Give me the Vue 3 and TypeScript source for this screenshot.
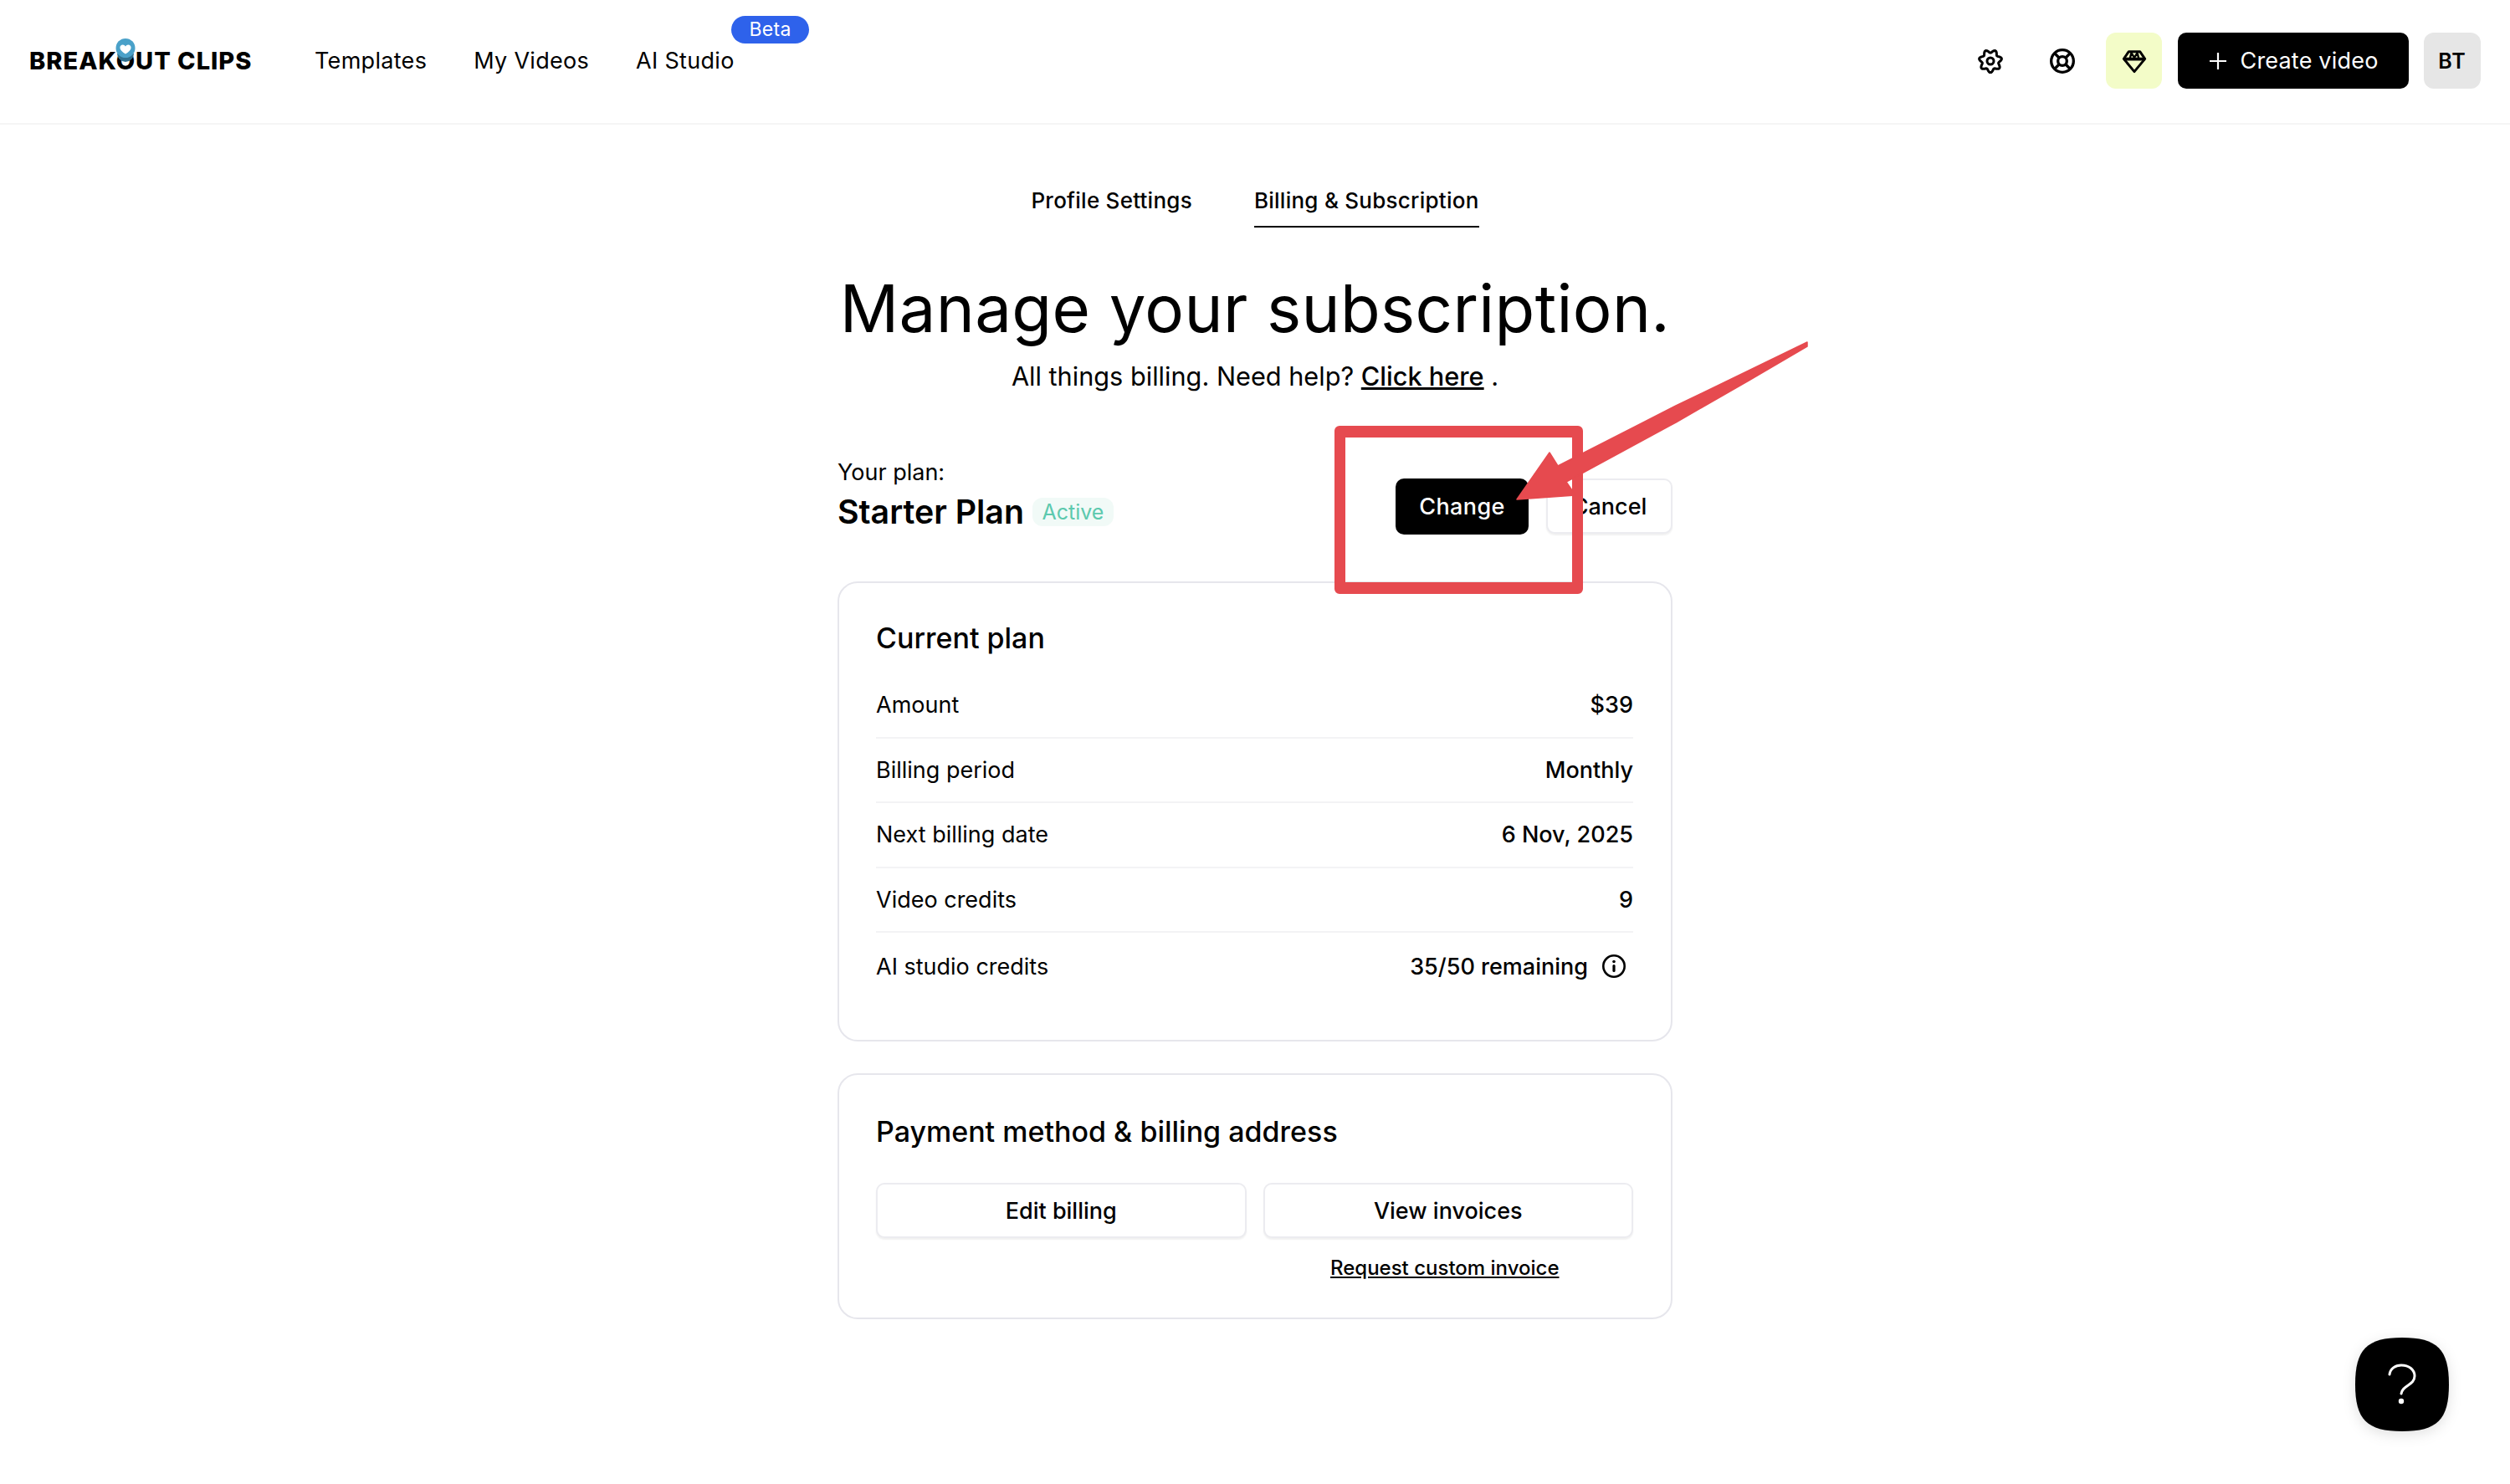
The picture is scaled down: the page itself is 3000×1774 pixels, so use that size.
<script setup lang="ts">
interface PlanRow {
  label: string;
  value: string;
  info?: boolean;
}

const navLinks = ["Templates", "My Videos", "AI Studio"];

const planRows: PlanRow[] = [
  { label: "Amount", value: "$39" },
  { label: "Billing period", value: "Monthly" },
  { label: "Next billing date", value: "6 Nov, 2025" },
  { label: "Video credits", value: "9" },
  { label: "AI studio credits", value: "35/50 remaining", info: true },
];

// wavy eight-lobed outline of the settings icon
function gearOutline(): string {
  const points: string[] = [];
  for (let i = 0; i < 96; i++) {
    const angle = (i / 96) * Math.PI * 2;
    const radius = 11.8 + 1.9 * Math.cos(angle * 7 + Math.PI / 2 + 1.57);
    points.push(`${(15 + radius * Math.sin(angle)).toFixed(2)} ${(15 - radius * Math.cos(angle)).toFixed(2)}`);
  }
  return "M" + points.join("L") + "Z";
}
</script>

<template>
  <div class="page">
    <header class="topbar">
      <div class="topbar-left">
        <div class="logo">
          <span class="logo-text">BREAKOUT CLIPS</span>
          <svg class="logo-pin" width="26" height="36" viewBox="0 0 26 36">
            <path d="M3 19a10 10 0 0 0 20 0z" fill="#2f6f8e" />
            <circle cx="13" cy="12.5" r="11.5" fill="#4aa1c9" />
            <path d="M13 19.500c-4-2.600-6.600-4.900-6.600-7.600 0-2 1.500-3.400 3.300-3.400 1.400 0 2.600.8 3.300 2 .7-1.200 1.900-2 3.300-2 1.800 0 3.300 1.400 3.300 3.400 0 2.700-2.600 5-6.600 7.600z" fill="#fff" />
          </svg>
        </div>
        <nav class="nav">
          <a v-for="link in navLinks" :key="link" class="nav-link">
            {{ link }}
            <span v-if="link === 'AI Studio'" class="beta">Beta</span>
          </a>
        </nav>
      </div>
      <div class="topbar-right">
        <svg class="icon gear" width="30" height="30" viewBox="0 0 30 30" fill="none" stroke="#000" stroke-width="3">
          <path :d="gearOutline()" stroke-linejoin="round" />
          <circle cx="15" cy="15" r="4" />
        </svg>
        <svg class="icon buoy" width="32" height="32" viewBox="0 0 24 24" fill="none" stroke="#000" stroke-width="2.500">
          <circle cx="12" cy="12" r="4" />
          <circle cx="12" cy="12" r="10" />
          <path d="M15 15l3.800 3.800M9 15l-3.800 3.800M5.200 5.200L9 9M18.800 5.200L15 9" />
        </svg>
        <button class="gem-btn">
          <svg width="32" height="32" viewBox="0 0 24 24" fill="none" stroke="#000" stroke-width="2.200" stroke-linejoin="round">
            <path d="M7 3.500h10l4.500 6.500L12 21.500 2.500 10z" />
            <path d="M2.500 10.200h19" stroke-width="2.800" />
            <path d="M8 10l1.500-6M16 10l-1.500-6M9 4l3 5 3-5" stroke-width="1.800" />
          </svg>
        </button>
        <button class="create-btn">
          <svg width="24" height="24" viewBox="0 0 24 24" stroke="#fff" stroke-width="2.200">
            <path d="M12 2v20M2 12h20" />
          </svg>
          Create video
        </button>
        <div class="avatar">BT</div>
      </div>
    </header>

    <main class="content">
      <div class="tabs">
        <a class="tab">Profile Settings</a>
        <a class="tab tab-active">Billing &amp; Subscription</a>
      </div>

      <h1 class="heading">Manage your subscription.</h1>
      <p class="subheading">All things billing. Need help? <a class="help-link">Click here</a> .</p>

      <section class="plan-summary">
        <div class="plan-info">
          <div class="plan-caption">Your plan:</div>
          <div class="plan-name-line">
            <span class="plan-name">Starter Plan</span>
            <span class="status">Active</span>
          </div>
        </div>
        <div class="plan-actions">
          <button class="btn btn-dark">Change</button>
          <button class="btn btn-outline btn-cancel">Cancel</button>
        </div>
      </section>

      <section class="card card-plan">
        <h2 class="card-title">Current plan</h2>
        <div v-for="row in planRows" :key="row.label" class="row" :class="{ 'row-last': row.info }">
          <span class="row-label">{{ row.label }}</span>
          <span class="row-value">
            {{ row.value }}
            <svg v-if="row.info" class="info" width="30" height="30" viewBox="0 0 30 30" fill="none" stroke="#000" stroke-width="2.600">
              <circle cx="15" cy="15" r="12.700" />
              <path d="M15 14.500v6" stroke-width="3.200" stroke-linecap="round" />
              <circle cx="15" cy="9.500" r="1.800" fill="#000" stroke="none" />
            </svg>
          </span>
        </div>
      </section>

      <section class="card card-payment">
        <h2 class="card-title">Payment method &amp; billing address</h2>
        <div class="payment-grid">
          <button class="btn btn-outline">Edit billing</button>
          <button class="btn btn-outline">View invoices</button>
          <a class="invoice-link">Request custom invoice</a>
        </div>
      </section>
    </main>

    <!-- red annotation drawn over the page -->
    <div class="mark-box"></div>
    <svg class="mark-arrow" width="380" height="210" viewBox="1800 400 380 210">
      <path
        d="M2160 409L2160 414L2090 455L2003 505L1872 576L1883 592L1813 597L1852 541L1862 557L2003 485L2090 443Z"
        fill="#e64a4f"
        stroke="#e64a4f"
        stroke-width="1.500"
        stroke-linejoin="round"
      />
    </svg>

    <button class="help-bubble" aria-label="Help">
      <svg width="112" height="112" viewBox="0 0 112 112">
        <path d="M56 0C98 0 112 14 112 56S98 112 56 112 0 98 0 56 14 0 56 0Z" fill="#000" />
        <path d="M41 44c1-7 7-11 14-11 9 0 16 5 16 13 0 11-15 11-16 21" fill="none" stroke="#fff" stroke-width="3" stroke-linecap="round" />
        <circle cx="55" cy="76" r="3.200" fill="#fff" />
      </svg>
    </button>
  </div>
</template>

<style>
body {
  background: #fff;
}
</style>

<style scoped>
.page {
  position: relative;
  height: 1774px;
  overflow: hidden;
  font-family: Inter, "Liberation Sans", sans-serif;
  color: #000;
  background: #fff;
}

button {
  font-family: inherit;
  cursor: pointer;
}

.topbar {
  height: 149px;
  box-sizing: border-box;
  border-bottom: 2px solid #f5f5f5;
  padding: 0 35px 2px;
  display: flex;
  align-items: center;
  justify-content: space-between;
}

.topbar-left {
  display: flex;
  align-items: center;
}

.logo {
  position: relative;
  width: 267px;
}

.logo-text {
  display: block;
  font-size: 29px;
  font-weight: 800;
  line-height: 36px;
  letter-spacing: 1px;
  white-space: nowrap;
}

.logo-pin {
  position: absolute;
  left: 102px;
  top: -10px;
}

.nav {
  display: flex;
  gap: 56px;
  margin-left: 74px;
}

.nav-link {
  position: relative;
  font-size: 27px;
  line-height: 36px;
  letter-spacing: 0.3px;
  white-space: nowrap;
}

.beta {
  position: absolute;
  left: 114px;
  top: -36px;
  width: 93px;
  height: 33px;
  border-radius: 17px;
  background: #2e62eb;
  color: #fff;
  font-size: 23px;
  line-height: 33px;
  letter-spacing: 0.3px;
  text-align: center;
}

.topbar-right {
  display: flex;
  align-items: center;
}

.gear {
  margin-right: 55px;
}

.buoy {
  margin-right: 36px;
}

.gem-btn {
  width: 67px;
  height: 67px;
  border: 0;
  border-radius: 12px;
  background: #f3fcc8;
  padding: 0;
  display: flex;
  align-items: center;
  justify-content: center;
}

.create-btn {
  width: 276px;
  height: 67px;
  margin-left: 19px;
  border: 0;
  border-radius: 10px;
  background: #000;
  color: #fff;
  font-size: 27px;
  letter-spacing: 0.2px;
  display: flex;
  align-items: center;
  justify-content: center;
  gap: 14px;
}

.avatar {
  width: 68px;
  height: 67px;
  margin-left: 18px;
  border-radius: 12px;
  background: #e6e6e6;
  font-size: 25px;
  font-weight: 600;
  letter-spacing: 1px;
  display: flex;
  align-items: center;
  justify-content: center;
}

.content {
  width: 998px;
  margin-left: 1001px;
  padding-top: 71px;
}

.tabs {
  display: flex;
  justify-content: center;
  gap: 74px;
}

.tab {
  font-size: 26px;
  font-weight: 500;
  line-height: 40px;
  padding-bottom: 10px;
  border-bottom: 2px solid transparent;
  letter-spacing: 0.25px;
  white-space: nowrap;
}

.tab-active {
  border-bottom-color: #000;
}

.heading {
  margin: 47px 0 0;
  font-size: 78px;
  font-weight: 400;
  line-height: 100px;
  letter-spacing: 0.35px;
  text-align: center;
  white-space: nowrap;
}

.subheading {
  margin: 9px 0 0;
  font-size: 30.700px;
  line-height: 44px;
  text-align: center;
}

.help-link {
  font-weight: 500;
  text-decoration: underline;
}

.plan-summary {
  margin-top: 75px;
  display: flex;
  justify-content: space-between;
}

.plan-caption {
  font-size: 27px;
  line-height: 36px;
}

.plan-name-line {
  margin-top: 4px;
  display: flex;
  align-items: center;
  gap: 10px;
  padding-bottom: 2px;
}

.plan-name {
  font-size: 39.300px;
  font-weight: 600;
  line-height: 50px;
}

.status {
  width: 97px;
  height: 34px;
  border-radius: 12px;
  background: #f1faf7;
  color: #5cc9ae;
  font-size: 25px;
  line-height: 34px;
  text-align: center;
}

.plan-actions {
  align-self: flex-end;
  display: flex;
  gap: 21px;
}

.btn {
  height: 67px;
  box-sizing: border-box;
  border-radius: 10px;
  font-size: 27px;
  font-weight: 500;
  padding: 0;
}

.btn-dark {
  width: 159px;
  border: 0;
  background: #000;
  color: #fff;
  letter-spacing: 0.4px;
}

.btn-outline {
  border: 2px solid #ececf0;
  background: #fff;
  color: #000;
  box-shadow: 0 2px 2px rgba(0, 0, 0, 0.06);
}

.btn-cancel {
  width: 151px;
  height: 66px;
}

.card {
  border: 2px solid #e6e6ec;
  border-radius: 24px;
  padding-left: 44px;
  padding-right: 45px;
}

.card-plan {
  margin-top: 56px;
  padding-top: 44px;
  padding-bottom: 48px;
}

.card-payment {
  margin-top: 38px;
  padding-top: 46px;
  padding-bottom: 43px;
}

.card-title {
  margin: 0;
  font-size: 34px;
  font-weight: 500;
  line-height: 44px;
  white-space: nowrap;
}

.card-plan .card-title {
  margin-bottom: 20px;
}

.row {
  height: 77.5px;
  box-sizing: border-box;
  border-bottom: 2px solid #f3f3f5;
  display: flex;
  align-items: center;
  justify-content: space-between;
  font-size: 27px;
}

.row-last {
  height: 80px;
  border-bottom: 0;
}

.row-value {
  display: flex;
  align-items: center;
  font-weight: 500;
}

.info {
  margin-left: 16px;
  margin-right: 8px;
}

.payment-grid {
  margin-top: 39px;
  display: grid;
  grid-template-columns: 1fr 1fr;
  column-gap: 20px;
}

.payment-grid .btn {
  height: 66px;
}

.invoice-link {
  grid-column: 2;
  justify-self: center;
  margin: 20px 8px 0 0;
  font-size: 24px;
  font-weight: 500;
  line-height: 32px;
  text-decoration: underline;
  white-space: nowrap;
}

.mark-box {
  position: absolute;
  left: 1595px;
  top: 509px;
  width: 297px;
  height: 201px;
  box-sizing: border-box;
  border: 13px solid #e64a4f;
  border-top-width: 14px;
  border-bottom-width: 14px;
  border-radius: 6px;
}

.mark-arrow {
  position: absolute;
  left: 1800px;
  top: 400px;
}

.help-bubble {
  position: absolute;
  left: 2815px;
  top: 1599px;
  width: 112px;
  height: 112px;
  padding: 0;
  border: 0;
  background: none;
  filter: drop-shadow(0 4px 8px rgba(0, 0, 0, 0.12));
}
</style>
